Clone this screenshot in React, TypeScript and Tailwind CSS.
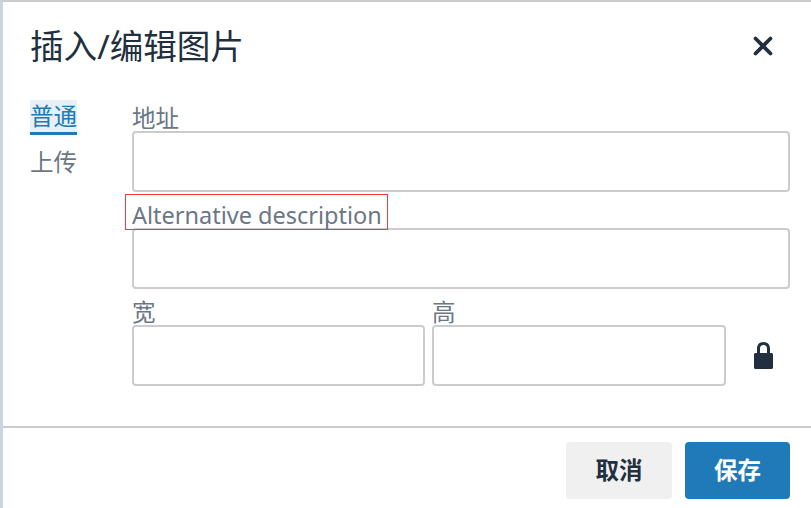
import { X } from 'lucide-react';

const inputClass =
  'block w-full h-[61px] rounded-[4px] border-2 border-[#cccccc] bg-white';

const labelClass =
  'block h-[26px] text-[23.5px] leading-[26px] text-[#6b7785]';

export default function App() {
  return (
    <div
      className="relative h-[508px] w-[811px] overflow-hidden border-t-[2px] border-l-[3px] border-t-[#cccccc] border-l-[#c9d6e2] bg-white"
      style={{ fontFamily: '"Noto Sans", "Noto Sans CJK SC", sans-serif' }}
    >
      {/* HEADER */}
      <div className="flex h-[88px] items-center justify-between pr-[33px] pl-[27px]">
        <h1 className="text-[33.6px] leading-[44px] font-normal text-[#222f3e]">
          插入/编辑图片
        </h1>

        <X size={30} strokeWidth={3} className="text-[#222f3e]" />
      </div>

      {/* BODY */}
      <div className="flex h-[336px] pr-[21px] pl-[27px]">
        {/* TABS */}
        <div className="flex w-[102px] shrink-0 flex-col items-start pt-[10px]">
          <span className="h-[35px] border-b-[3px] border-[#207ab7] bg-[#e6f0f7] text-[23.5px] leading-[32px] text-[#207ab7]">
            普通
          </span>

          <span className="mt-[11px] text-[23.5px] leading-[32px] text-[#6b7785]">
            上传
          </span>
        </div>

        {/* FIELDS */}
        <div className="flex-1 pt-[15px]">
          <label className={labelClass}>地址</label>
          <div className={inputClass} />

          <label className={`${labelClass} mt-[10px]`}>Alternative description</label>
          <div className={inputClass} />

          <div className="mt-[10px] flex gap-[7px]">
            <div className="w-[293px]">
              <label className={labelClass}>宽</label>
              <div className={inputClass} />
            </div>

            <div className="w-[294px]">
              <label className={labelClass}>高</label>
              <div className={inputClass} />
            </div>

            <div className="flex flex-1 items-center justify-end pt-[26px] pr-[17px]">
              <svg width="19" height="27" viewBox="0 0 19 27" className="text-[#222f3e]">
                <path
                  fill="currentColor"
                  d="M9.5 0C5.4 0 3 2.8 3 6.5V11H1.5C.7 11 0 11.7 0 12.5V25.5C0 26.3.7 27 1.5 27H17.500C18.300 27 19 26.300 19 25.500V12.500C19 11.700 18.300 11 17.500 11H16V6.500C16 2.800 13.600 0 9.500 0ZM6 11V6.500C6 4.300 7.300 3 9.500 3S13 4.300 13 6.500V11H6Z"
                />
              </svg>
            </div>
          </div>
        </div>
      </div>

      {/* FOOTER */}
      <div className="flex h-[82px] items-start justify-end gap-[13px] border-t-2 border-[#cccccc] pt-[14px] pr-[21px]">
        <button className="h-[57px] w-[106px] rounded-[4px] bg-[#f0f0f0] text-[23.5px] font-bold text-[#222f3e]">
          取消
        </button>

        <button className="h-[57px] w-[105px] rounded-[4px] bg-[#207ab7] text-[23.5px] font-bold text-white">
          保存
        </button>
      </div>

      {/* RED ANNOTATION BOX */}
      <div className="absolute top-[192px] left-[122px] h-[36px] w-[263px] border border-[#f03a3a]" />
    </div>
  );
}
